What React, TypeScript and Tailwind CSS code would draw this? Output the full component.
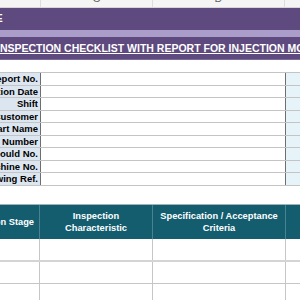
import React from "react";

const labels = [
  "Report No.",
  "Inspection Date",
  "Shift",
  "Customer",
  "Part Name",
  "Part Number",
  "Mould No.",
  "Machine No.",
  "Drawing Ref.",
];

export default function App() {
  return (
    <div
      className="w-[300px] h-[300px] overflow-hidden bg-white flex flex-col"
      style={{ fontFamily: '"Liberation Sans", Arial, sans-serif' }}
    >
      {/* column letter header */}
      <div className="h-[8px] shrink-0 flex bg-[#f4f4f4] border-b border-[#d6d6d6] overflow-hidden">
        <div className="w-[41px] shrink-0 border-r border-[#dcdcdc]" />
        <div className="w-[112px] shrink-0 border-r border-[#dcdcdc] flex justify-center items-end">
          <span className="text-[11px] leading-[11px] text-[#666] mb-[3px]">C</span>
        </div>
        <div className="w-[132px] shrink-0 border-r border-[#dcdcdc] flex justify-center items-end">
          <span className="text-[11px] leading-[11px] text-[#666] mb-[3px]">D</span>
        </div>
        <div className="flex-1" />
      </div>

      {/* purple band 1 */}
      <div className="h-[22px] shrink-0 bg-[#5e4a7e] flex items-center overflow-hidden">
        <span className="text-[10px] font-bold text-white ml-[-4px] leading-none">E</span>
      </div>
      {/* light purple stripe */}
      <div className="h-[7px] shrink-0 bg-[#ab9dc9]" />
      {/* title band */}
      <div className="h-[23px] shrink-0 bg-[#5e4a7e] border-b border-[#7a6a97] flex items-center overflow-hidden">
        <span className="whitespace-nowrap text-[10.5px] font-bold text-white underline underline-offset-[1px] ml-[-3px] leading-none">
          INSPECTION CHECKLIST WITH REPORT FOR INJECTION MOULDING
        </span>
      </div>

      {/* gap */}
      <div className="h-[12px] shrink-0" />

      {/* info rows */}
      <div className="shrink-0 flex flex-col border-t border-[#c4c4c4]">
        {labels.map((l) => (
          <div key={l} className="h-[12.5px] flex border-b border-[#c4c4c4]">
            <div className="w-[41px] shrink-0 bg-[#dce6f1] border-r border-[#6e6e6e] flex justify-end items-center overflow-hidden pr-[2px]">
              <span className="whitespace-nowrap shrink-0 text-[9.5px] font-bold text-black leading-none">{l}</span>
            </div>
            <div className="w-[244px] shrink-0 bg-white" />
            <div className="flex-1 bg-[#e6f4fa] border-l border-[#6e6e6e]" />
          </div>
        ))}
      </div>

      {/* gap */}
      <div className="h-[18px] shrink-0" />

      {/* teal header */}
      <div className="h-[35px] shrink-0 flex bg-[#135d6f] border-t border-[#9fb3b8] text-white font-bold text-[9.3px] leading-[12px]">
        <div className="w-[40px] shrink-0 border-r border-[#4b8290] flex justify-end items-center overflow-hidden pr-[5px]">
          <span className="whitespace-nowrap shrink-0">Inspection Stage</span>
        </div>
        <div className="w-[113px] shrink-0 border-r border-[#4b8290] flex items-center justify-center text-center">
          <span>
            Inspection
            <br />
            Characteristic
          </span>
        </div>
        <div className="w-[133px] shrink-0 border-r border-[#4b8290] flex items-center justify-center text-center">
          <span className="whitespace-nowrap">
            Specification / Acceptance
            <br />
            Criteria
          </span>
        </div>
        <div className="flex-1" />
      </div>

      {/* body rows */}
      {[0, 1, 2].map((i) => (
        <div
          key={i}
          className={`shrink-0 flex ${i === 0 ? "h-[23px] border-b-2 border-[#d4d4d4]" : "h-[22px] border-b border-[#c6c6c6]"}`}
        >
          <div className="w-[40px] shrink-0 border-r border-[#c6c6c6]" />
          <div className="w-[113px] shrink-0 border-r border-[#c6c6c6]" />
          <div className="w-[133px] shrink-0 border-r border-[#c6c6c6]" />
          <div className="flex-1" />
        </div>
      ))}
    </div>
  );
}
